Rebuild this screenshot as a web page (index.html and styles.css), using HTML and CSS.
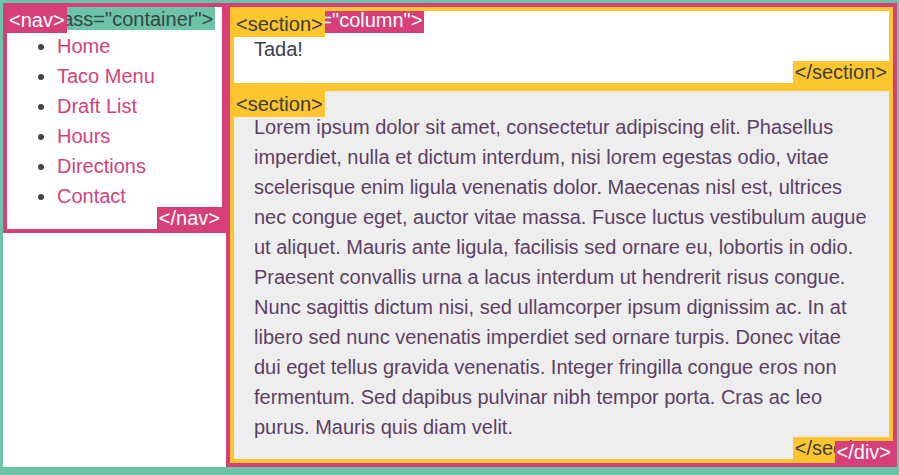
FILE: index.html
```html
<!DOCTYPE html>
<html>
<head>
<meta charset="utf-8">
<link rel="stylesheet" href="styles.css">
</head>
<body>
<div class="container">
  <span class="tag tag-open tag-teal tag-root">&lt;div class="container"&gt;</span>
  <nav class="nav">
    <span class="tag tag-open tag-pink">&lt;nav&gt;</span>
    <ul class="menu">
      <li><a href="#">Home</a></li>
      <li><a href="#">Taco Menu</a></li>
      <li><a href="#">Draft List</a></li>
      <li><a href="#">Hours</a></li>
      <li><a href="#">Directions</a></li>
      <li><a href="#">Contact</a></li>
    </ul>
    <span class="tag tag-close tag-pink">&lt;/nav&gt;</span>
  </nav>
  <div class="column">
    <span class="tag tag-open tag-pink">&lt;div class="column"&gt;</span>
    <section class="sec sec-first">
      <span class="tag tag-open tag-yellow">&lt;section&gt;</span>
      <p class="tada">Tada!</p>
      <span class="tag tag-close tag-yellow">&lt;/section&gt;</span>
    </section>
    <section class="sec sec-second">
      <span class="tag tag-open tag-yellow">&lt;section&gt;</span>
      <p class="lorem">Lorem ipsum dolor sit amet, consectetur adipiscing elit. Phasellus imperdiet, nulla et dictum interdum, nisi lorem egestas odio, vitae scelerisque enim ligula venenatis dolor. Maecenas nisl est, ultrices nec congue eget, auctor vitae massa. Fusce luctus vestibulum augue ut aliquet. Mauris ante ligula, facilisis sed ornare eu, lobortis in odio. Praesent convallis urna a lacus interdum ut hendrerit risus congue. Nunc sagittis dictum nisi, sed ullamcorper ipsum dignissim ac. In at libero sed nunc venenatis imperdiet sed ornare turpis. Donec vitae dui eget tellus gravida venenatis. Integer fringilla congue eros non fermentum. Sed dapibus pulvinar nibh tempor porta. Cras ac leo purus. Mauris quis diam velit.</p>
      <span class="tag tag-close tag-yellow">&lt;/section&gt;</span>
    </section>
    <span class="tag tag-close tag-pink">&lt;/div&gt;</span>
  </div>
</div>
</body>
</html>
```

FILE: styles.css
```css
html, body {
  margin: 0;
  padding: 0;
  background: #ffffff;
}

body {
  font-family: "Liberation Sans", Arial, sans-serif;
  font-size: 20px;
}

.container {
  position: relative;
  display: flex;
  align-items: flex-start;
  border-style: solid;
  border-color: #6bc4a8;
  border-width: 3px 2px 8px 3px;
  background: #ffffff;
}

.tag {
  position: absolute;
  font-size: 20px;
  padding: 0 2px;
  white-space: nowrap;
}

.tag-open {
  top: 0;
  left: 0;
  line-height: 26px;
}

.tag-root {
  line-height: 22px;
  padding-top: 5px;
}

.tag-close {
  bottom: 0;
  right: 0;
  line-height: 22px;
}

.tag-teal {
  background: #6bc4a8;
  color: #3a4545;
}

.tag-pink {
  background: #d63f78;
  color: #ffffff;
}

.tag-yellow {
  background: #fdc62f;
  color: #3d3d3d;
}

.nav {
  position: relative;
  box-sizing: border-box;
  width: 223px;
  flex: none;
  border: 4px solid #d63f78;
  padding: 24px 0 18px;
}

.menu {
  margin: 0;
  padding-left: 50px;
  line-height: 30px;
  color: #444444;
}

.menu a {
  color: #d63f78;
  text-decoration: none;
}

.column {
  position: relative;
  flex: 1;
  border: 4px solid #d63f78;
  background: #ffffff;
}

.sec {
  position: relative;
  border: 4px solid #fdc62f;
  padding: 0 20px;
}

.sec-first {
  padding-top: 23px;
  padding-bottom: 19px;
}

.sec-second {
  background: #eeeeee;
  padding-top: 21px;
  padding-bottom: 17px;
}

.tada {
  margin: 0;
  line-height: 30px;
  color: #384150;
}

.lorem {
  margin: 0;
  line-height: 30px;
  color: #5c3f64;
}
```
